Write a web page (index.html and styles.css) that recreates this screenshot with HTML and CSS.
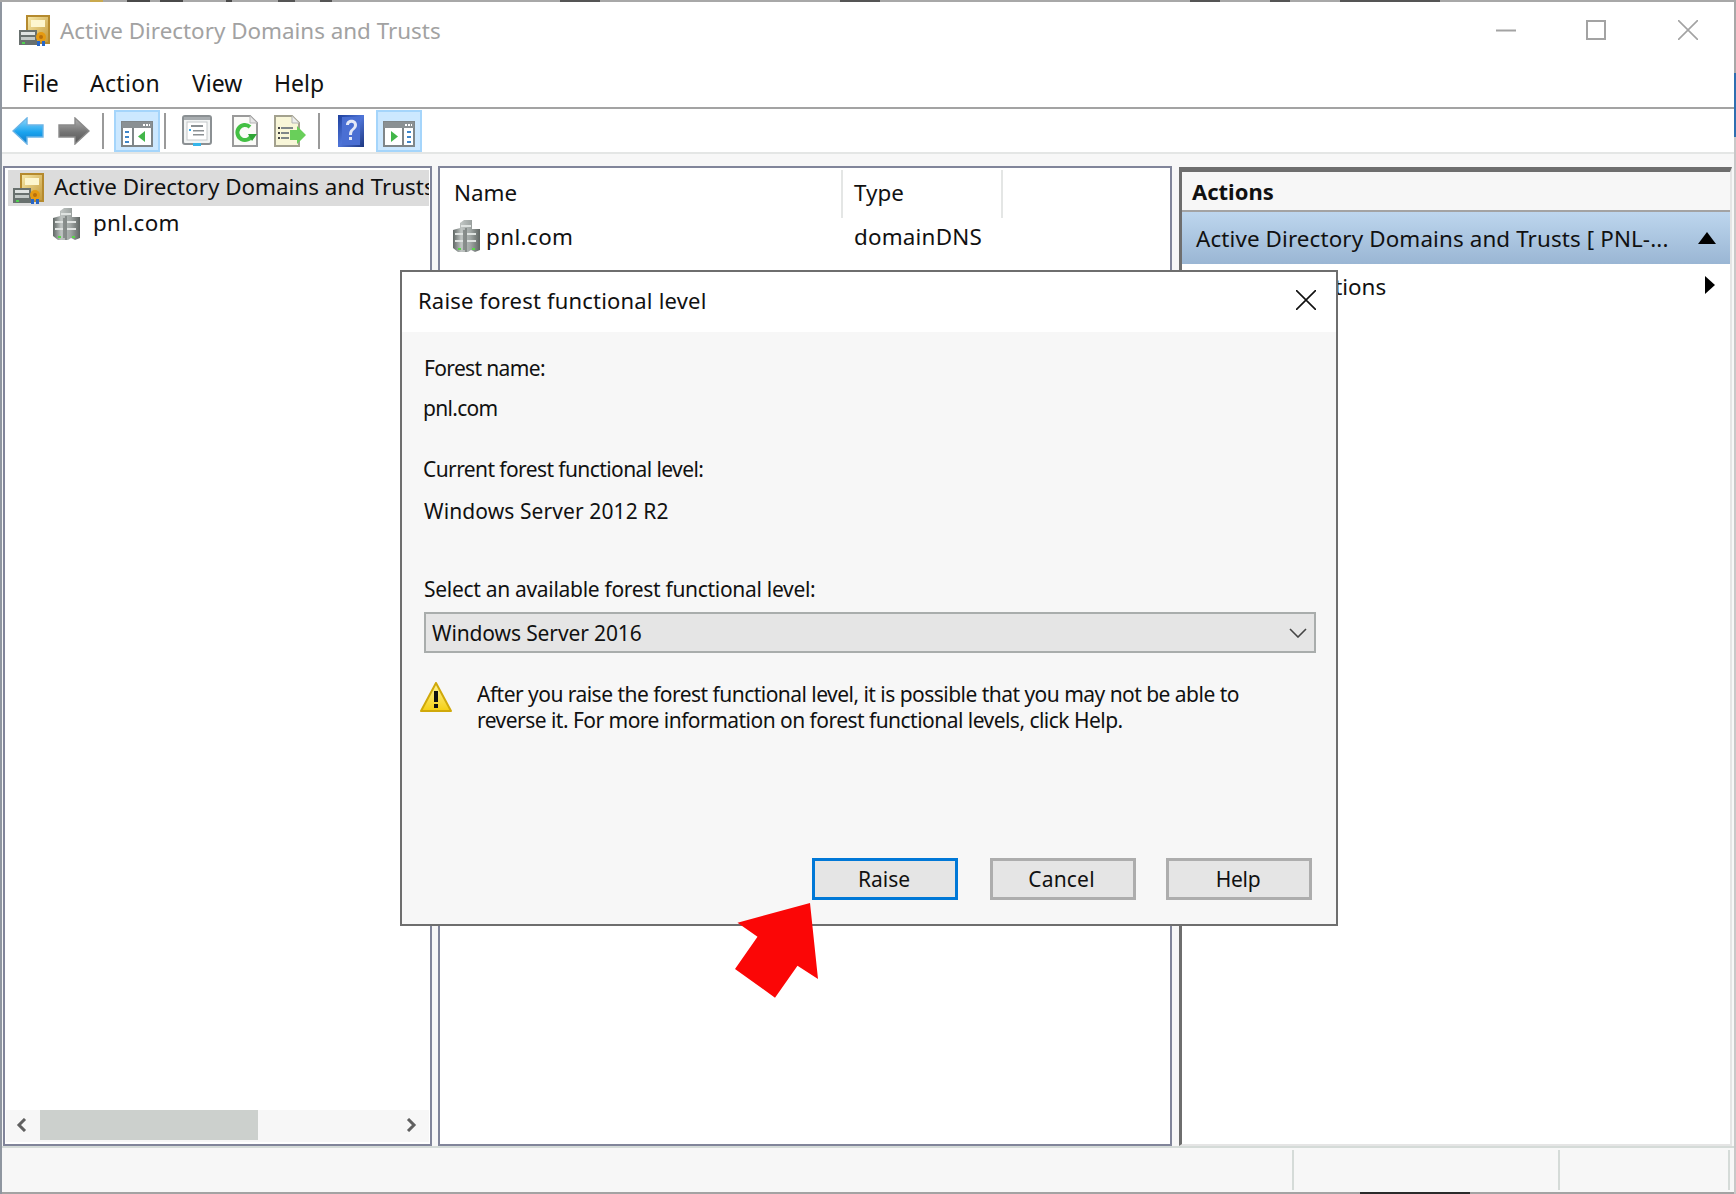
FILE: index.html
```html
<!DOCTYPE html>
<html lang="en">
<head>
<meta charset="utf-8">
<title>Active Directory Domains and Trusts</title>
<link rel="stylesheet" href="styles.css">
</head>
<body>
<svg width="0" height="0" class="defs">
  <defs>
    <linearGradient id="bld" x1="0" y1="0" x2="1" y2="0"><stop offset="0" stop-color="#5f6664"/><stop offset=".3" stop-color="#bfc4c2"/><stop offset=".65" stop-color="#a0a6a4"/><stop offset="1" stop-color="#5f6563"/></linearGradient>
    <linearGradient id="gold" x1="0" y1="0" x2="1" y2="1"><stop offset="0" stop-color="#f6e7a6"/><stop offset="1" stop-color="#c49a3c"/></linearGradient>
    <linearGradient id="blue" x1="0" y1="0" x2="0" y2="1"><stop offset="0" stop-color="#8fd8fc"/><stop offset=".55" stop-color="#1aa3ee"/><stop offset="1" stop-color="#0f78c8"/></linearGradient>
    <linearGradient id="gray" x1="0" y1="0" x2="0" y2="1"><stop offset="0" stop-color="#b3b3b3"/><stop offset=".55" stop-color="#737373"/><stop offset="1" stop-color="#565656"/></linearGradient>
    <linearGradient id="qm" x1="0" y1="0" x2="1" y2="1"><stop offset="0" stop-color="#1d3f9c"/><stop offset=".5" stop-color="#4f75d8"/><stop offset="1" stop-color="#1c367f"/></linearGradient>
    <linearGradient id="warn" x1="0" y1="0" x2="0" y2="1"><stop offset="0" stop-color="#fff49a"/><stop offset="1" stop-color="#f5cf12"/></linearGradient>
    <symbol id="cert" viewBox="0 0 32 32">
      <rect x="8" y="1" width="24" height="29" fill="#b58a2e"/>
      <rect x="10" y="3" width="20" height="25" fill="url(#gold)"/>
      <rect x="13" y="6" width="14" height="7" fill="#fdf6cf"/>
      <rect x="1" y="16" width="18" height="15" fill="#68706e"/>
      <rect x="3" y="18" width="14" height="3" fill="#dfe3e2"/>
      <rect x="3" y="23" width="14" height="3" fill="#c3c9c7"/>
      <rect x="4" y="28" width="3" height="2" fill="#4fd14f"/>
      <circle cx="23" cy="23" r="5" fill="#e59a12"/>
      <circle cx="23" cy="23" r="2" fill="#b96f0c"/>
      <path d="M19 27h3v5h-3zM24 27h3v5h-3z" fill="#2766c8"/>
    </symbol>
    <symbol id="domain" viewBox="0 0 28 32">
      <path d="M8 3l4-3h8v9h8v21l-5 2-4-2-3 2H6L1 28V10l7-2z" fill="url(#bld)"/>
      <path d="M9 5h10v2H9zM3 13h8v2H3zM15 13h9v2h-9zM3 20h8v2H3zM15 20h9v2h-9z" fill="#dfe3e1"/>
      <path d="M12 10v20M14 8v24" stroke="#6a706e" stroke-width="1.200" fill="none"/>
      <rect x="6" y="28" width="3" height="2" fill="#59d64a"/>
      <rect x="20" y="28" width="3" height="2" fill="#59d64a"/>
    </symbol>
  </defs>
</svg>

<div class="window">
  <header class="titlebar">
    <svg class="title-icon"><use href="#cert"/></svg>
    <span class="title-text">Active Directory Domains and Trusts</span>
    <div class="win-controls">
      <svg class="wc wc-min" viewBox="0 0 20 20"><path d="M0 10.500h20" stroke="#a3a3a3" stroke-width="2"/></svg>
      <svg class="wc wc-max" viewBox="0 0 20 20"><rect x="1" y="1" width="18" height="18" fill="none" stroke="#a3a3a3" stroke-width="2"/></svg>
      <svg class="wc wc-close" viewBox="0 0 20 20"><path d="M0 0l20 20M20 0L0 20" stroke="#a3a3a3" stroke-width="1.600"/></svg>
    </div>
  </header>

  <nav class="menubar">
    <span class="menu-item m-file">File</span>
    <span class="menu-item m-action">Action</span>
    <span class="menu-item m-view">View</span>
    <span class="menu-item">Help</span>
  </nav>

  <div class="toolbar">
    <svg class="tb tb-back" viewBox="0 0 32 28"><path d="M1 14L15 1v7h16v12H15v7z" fill="url(#blue)" stroke="#6bb4e6" stroke-width="1.400"/></svg>
    <svg class="tb tb-fwd" viewBox="0 0 32 28"><path d="M31 14L17 1v7H1v12h16v7z" fill="url(#gray)" stroke="#8a8a8a" stroke-width="1.400"/></svg>
    <i class="tb-sep sep-a"></i>
    <span class="tb-toggle toggle-a">
      <svg class="tb-pane" viewBox="0 0 32 26">
        <rect x="1" y="1" width="30" height="24" fill="#fff" stroke="#7f8689" stroke-width="2"/>
        <rect x="1" y="1" width="30" height="6" fill="#8a9093"/>
        <path d="M22 3h2v2h-2zM25 3h2v2h-2zM28 3h1v2h-1z" fill="#fff"/>
        <rect x="11" y="7" width="2" height="18" fill="#7f8689"/>
        <path d="M4 10h4v2H4zM4 15h4v2H4zM4 20h4v2H4z" fill="#3f86c9"/>
        <path d="M24 10v11l-7-5.500z" fill="#42b649"/>
      </svg>
    </span>
    <i class="tb-sep sep-b"></i>
    <svg class="tb tb-list" viewBox="0 0 30 32">
      <rect x="1" y="1" width="28" height="28" rx="2" fill="#f2f4f4" stroke="#8b9093" stroke-width="2"/>
      <rect x="2" y="2" width="26" height="3" fill="#a8adb0"/>
      <rect x="5" y="7" width="20" height="18" fill="#fff" stroke="#c4c8ca"/>
      <path d="M9 10h12v2H9zM11 15h11v1.500H11zM11 19h11v1.500H11z" fill="#8b9093"/>
      <path d="M7 14h2v2H7z" fill="#35a9e8"/>
      <rect x="11" y="28" width="8" height="3" fill="#35b5ea"/>
    </svg>
    <svg class="tb tb-refresh" viewBox="0 0 26 32">
      <path d="M1 1h17l7 7v23H1z" fill="#fbfbf8" stroke="#9a9a9a" stroke-width="2"/>
      <path d="M18 1v7h7" fill="#e6e6e6" stroke="#b5b5b5"/>
      <path d="M18 12a7.500 7.500 0 1 0 2 8" fill="none" stroke="#43c043" stroke-width="4"/>
      <path d="M16 19h9l-5 7z" fill="#2fa535"/>
    </svg>
    <svg class="tb tb-export" viewBox="0 0 32 32">
      <path d="M1 1h17l7 7v23H1z" fill="#f8f6d8" stroke="#a3a18e" stroke-width="2"/>
      <path d="M18 1v7h7" fill="#eeeeee" stroke="#b5b5b5"/>
      <path d="M7 12h12v2H7zM7 17h8v2H7zM7 22h8v2H7z" fill="#7f8689"/>
      <path d="M4 12h2v2H4zM4 17h2v2H4zM4 22h2v2H4z" fill="#444"/>
      <path d="M16 15h7v-4l9 9-9 9v-4h-7z" fill="#69cf5a"/>
    </svg>
    <i class="tb-sep sep-c"></i>
    <svg class="tb tb-help" viewBox="0 0 26 32">
      <rect width="26" height="32" fill="url(#qm)"/>
      <rect x="4" y="2" width="18" height="28" fill="#4a6fd3"/>
      <path d="M8 10c0-7 11-7 11 0 0 5-5 4-5 10h-3c0-7 5-6 5-10 0-3-5-3-5 0z" fill="#e4e9f7"/>
      <rect x="11" y="22" width="3" height="3" fill="#e4e9f7"/>
    </svg>
    <span class="tb-toggle toggle-b">
      <svg class="tb-pane" viewBox="0 0 32 26">
        <rect x="1" y="1" width="30" height="24" fill="#fff" stroke="#7f8689" stroke-width="2"/>
        <rect x="1" y="1" width="30" height="6" fill="#8a9093"/>
        <path d="M22 3h2v2h-2zM25 3h2v2h-2zM28 3h1v2h-1z" fill="#fff"/>
        <rect x="19" y="7" width="2" height="18" fill="#7f8689"/>
        <path d="M24 10h4v2h-4zM24 15h4v2h-4zM24 20h4v2h-4z" fill="#3f86c9"/>
        <path d="M8 10v11l7-5.500z" fill="#42b649"/>
      </svg>
    </span>
  </div>

  <main class="panes">
    <section class="pane-tree">
      <div class="tree">
        <div class="tree-row selected">
          <svg class="tree-icon"><use href="#cert"/></svg>
          <span class="tree-label">Active Directory Domains and Trusts</span>
        </div>
        <div class="tree-row child">
          <svg class="dom-icon"><use href="#domain"/></svg>
          <span class="tree-label">pnl.com</span>
        </div>
      </div>
      <div class="hscroll">
        <svg class="sb-arrow" viewBox="0 0 12 14"><path d="M9 1L3 7l6 6" fill="none" stroke="#606060" stroke-width="3"/></svg>
        <div class="sb-track"><div class="sb-thumb"></div></div>
        <svg class="sb-arrow" viewBox="0 0 12 14"><path d="M3 1l6 6-6 6" fill="none" stroke="#606060" stroke-width="3"/></svg>
      </div>
    </section>

    <section class="pane-list">
      <div class="list-head">
        <span class="col col-name">Name</span>
        <span class="col col-type">Type</span>
      </div>
      <div class="list-row">
        <span class="cell-name"><svg class="dom-icon"><use href="#domain"/></svg><span class="cell-label">pnl.com</span></span>
        <span class="cell-type">domainDNS</span>
      </div>
    </section>

    <aside class="pane-actions">
      <div class="act-title">Actions</div>
      <div class="act-band"><span>Active Directory Domains and Trusts [ PNL-...</span><i class="tri-up"></i></div>
      <div class="act-row"><span>More Actions</span><i class="tri-right"></i></div>
    </aside>
  </main>

  <footer class="statusbar">
    <i class="st-cell st-a"></i><i class="st-cell st-b"></i><i class="st-cell st-c"></i>
  </footer>
</div>

<div class="dialog">
  <div class="dlg-head">
    <span class="dlg-title">Raise forest functional level</span>
    <svg class="dlg-close" viewBox="0 0 20 20"><path d="M0 0l20 20M20 0L0 20" stroke="#111" stroke-width="1.600"/></svg>
  </div>
  <div class="dlg-body">
    <div class="lbl l1">Forest name:</div>
    <div class="lbl l2">pnl.com</div>
    <div class="lbl l3">Current forest functional level:</div>
    <div class="lbl l4">Windows Server 2012 R2</div>
    <div class="lbl l5">Select an available forest functional level:</div>
    <div class="combo">
      <span class="combo-value">Windows Server 2016</span>
      <svg class="chev" viewBox="0 0 18 10"><path d="M1 1l8 8 8-8" fill="none" stroke="#444" stroke-width="1.600"/></svg>
    </div>
    <div class="warn-row">
      <svg class="warn-icon" viewBox="0 0 32 30">
        <path d="M16 1L1 29h30z" fill="url(#warn)" stroke="#d0a90a" stroke-width="2" stroke-linejoin="round"/>
        <rect x="14" y="9" width="4" height="11" fill="#111"/>
        <rect x="14" y="22" width="4" height="4" fill="#111"/>
      </svg>
      <p class="warn-text">After you raise the forest functional level, it is possible that you may not be able to<br>reverse it. For more information on forest functional levels, click Help.</p>
    </div>
    <div class="dlg-buttons">
      <button class="btn btn-raise">Raise</button>
      <button class="btn btn-cancel">Cancel</button>
      <button class="btn btn-help">Help</button>
    </div>
  </div>
</div>

<svg class="red-arrow" viewBox="0 0 95 100"><polygon points="84,2 11.500,21.700 31.500,35.700 9,68 49,96.700 71.500,64.700 92,78" fill="#fb0606"/></svg>
</body>
</html>
```

FILE: styles.css
```css
* { box-sizing: border-box; }
html, body { margin: 0; padding: 0; }
body {
  width: 1736px;
  height: 1194px;
  position: relative;
  overflow: hidden;
  font-family: "Noto Sans", "Open Sans", sans-serif;
  color: #111;
  padding: 2px 2px 0 2px;
  background:
    linear-gradient(90deg, #a8a8a8 0 90px, #c9a94e 90px 103px, #a8a8a8 103px 127px, #4a4a4a 127px 150px, #a8a8a8 150px 160px, #4a4a4a 160px 183px, #a8a8a8 183px 226px, #4a4a4a 226px 232px, #a8a8a8 232px 278px, #555 278px 295px, #a8a8a8 295px 320px, #555 320px 332px, #a8a8a8 332px 560px, #555 560px 600px, #a8a8a8 600px 840px, #555 840px 880px, #a8a8a8 880px 1190px, #555 1190px 1220px, #a8a8a8 1220px 1270px, #555 1270px 1290px, #a8a8a8 1290px 1340px, #555 1340px 1440px, #a8a8a8 1440px) top / 100% 2px no-repeat,
    linear-gradient(180deg, #a8a8a8 0 73px, #2f6fb0 73px 137px, #c8c8c8 137px) right / 2px 100% no-repeat,
    #8f96a0;
}
.defs { position: absolute; }
.window {
  width: 1732px;
  height: 1192px;
  background: #fff;
  display: flex;
  flex-direction: column;
}
.titlebar {
  height: 60px;
  display: flex;
  align-items: center;
  flex: none;
  padding-bottom: 4px;
}
.title-icon { width: 32px; height: 32px; margin-left: 16px; flex: none; }
.title-text { margin-left: 10px; font-size: 22.4px; color: #a2a2a2; white-space: nowrap; }
.win-controls { margin-left: auto; display: flex; align-items: center; }
.wc { width: 20px; height: 20px; display: block; }
.wc-min { margin-right: 70px; }
.wc-max { margin-right: 72px; }
.wc-close { margin-right: 36px; }

.menubar {
  height: 47px;
  border-bottom: 2px solid #a3a3a3;
  display: flex;
  align-items: center;
  padding: 0 0 4px 20px;
  font-size: 23px;
  flex: none;
}
.menu-item { white-space: nowrap; }
.m-file { width: 68px; }
.m-action { width: 102px; letter-spacing: .3px; }
.m-view { width: 82px; }

.toolbar {
  height: 45px;
  border-bottom: 2px solid #e4e6e5;
  display: flex;
  align-items: center;
  flex: none;
  background: #fff;
}
.tb { display: block; flex: none; }
.tb-back { width: 32px; height: 28px; margin-left: 10px; margin-top: 1px; }
.tb-fwd { width: 32px; height: 28px; margin-left: 14px; margin-top: 1px; }
.tb-sep { width: 2px; height: 36px; background: #9a9a9a; flex: none; display: block; }
.sep-a { margin-left: 12px; }
.tb-toggle {
  width: 46px;
  height: 42px;
  background: #cce8ff;
  border: 2px solid #a5d5fb;
  display: flex;
  align-items: center;
  justify-content: center;
  flex: none;
}
.tb-pane { width: 32px; height: 26px; margin-top: 6px; display: block; }
.toggle-a { margin-left: 10px; }
.sep-b { margin-left: 4px; }
.tb-list { width: 30px; height: 32px; margin-left: 16px; }
.tb-refresh { width: 26px; height: 32px; margin-left: 20px; }
.tb-export { width: 32px; height: 32px; margin-left: 16px; }
.sep-c { margin-left: 12px; }
.tb-help { width: 26px; height: 32px; margin-left: 18px; }
.toggle-b { margin-left: 12px; }

.panes {
  flex: 1;
  min-height: 0;
  background: #f7f7f7;
  display: flex;
  padding: 12px 2px 0 1px;
}
.pane-tree {
  width: 429px;
  border: 2px solid #81859a;
  background: #fff;
  display: flex;
  flex-direction: column;
  flex: none;
  padding: 2px 1px 2px 3px;
}
.tree { flex: 1; overflow: hidden; }
.tree-row { height: 36px; display: flex; align-items: center; white-space: nowrap; overflow: hidden; font-size: 22.4px; }
.tree-label { margin-bottom: 4px; }
.tree-row.selected { background: #dcdcdc; }
.tree-icon { width: 32px; height: 32px; margin-left: 4px; flex: none; }
.selected .tree-label { margin-left: 10px; }
.child .dom-icon { margin-left: 44px; }
.child .tree-label { margin-left: 13px; letter-spacing: .3px; }
.dom-icon { width: 28px; height: 32px; flex: none; }
.hscroll {
  height: 32px;
  background: #f7f7f7;
  display: flex;
  align-items: flex-start;
  flex: none;
  margin-left: -2px;
}
.sb-arrow { width: 12px; height: 14px; margin: 8px 12px 0 10px; flex: none; }
.sb-track { flex: 1; height: 30px; }
.sb-thumb { width: 218px; height: 30px; background: #ccd0cd; }

.pane-list {
  width: 734px;
  margin-left: 6px;
  border: 2px solid #81859a;
  background: #fff;
  flex: none;
  font-size: 22.4px;
}
.list-head { height: 50px; padding-top: 2px; display: flex; }
.col { display: flex; align-items: center; border-right: 2px solid #e4e6e5; padding-bottom: 4px; }
.col-name { width: 403px; padding-left: 14px; }
.col-type { width: 160px; padding-left: 11px; }
.list-row { height: 36px; display: flex; align-items: center; }
.cell-name { width: 403px; padding-left: 12px; display: flex; align-items: center; gap: 6px; }
.cell-label { letter-spacing: .4px; }
.cell-type { padding-left: 11px; letter-spacing: .2px; }

.pane-actions {
  flex: 1;
  margin-left: 7px;
  margin-top: 1px;
  background: #fff;
  border-top: 5px solid #6e6e6e;
  border-left: 3px solid #6e6e6e;
  border-right: 2px solid #e5e5e5;
  border-bottom: 2px solid #e5e5e5;
  font-size: 22.4px;
}
.act-title {
  height: 40px;
  background: #f7f7f7;
  border-bottom: 2px solid #a3a3a3;
  font-weight: 700;
  font-size: 22px;
  padding-left: 10px;
  display: flex;
  align-items: center;
}
.act-band {
  height: 52px;
  background: linear-gradient(180deg, #bdd6ee, #9ab6d4);
  display: flex;
  align-items: center;
  padding-left: 14px;
  position: relative;
  letter-spacing: .12px;
}
.tri-up {
  position: absolute;
  left: 516px;
  top: 20px;
  border-left: 9px solid transparent;
  border-right: 9px solid transparent;
  border-bottom: 12px solid #000;
}
.act-row { height: 48px; display: flex; align-items: center; padding: 0 0 4px 66px; position: relative; }
.tri-right {
  position: absolute;
  left: 523px;
  top: 12px;
  border-top: 9px solid transparent;
  border-bottom: 9px solid transparent;
  border-left: 10px solid #000;
}

.statusbar {
  height: 48px;
  flex: none;
  background: #f7f7f7;
  border-top: 2px solid #d5dbd8;
  border-bottom: 2px solid #a3a3a3;
  display: flex;
  padding-top: 2px;
  position: relative;
}
.statusbar::after {
  content: "";
  position: absolute;
  left: 1358px;
  bottom: -2px;
  width: 110px;
  height: 2px;
  background: #2a2a2a;
}
.st-cell { display: block; height: 40px; border-right: 2px solid #d5dbd8; }
.st-a { width: 1292px; }
.st-b { width: 266px; }
.st-c { width: 170px; }

.dialog {
  position: absolute;
  left: 400px;
  top: 270px;
  width: 938px;
  height: 656px;
  border: 2px solid #6e6e6e;
  background: #f7f7f7;
  display: flex;
  flex-direction: column;
  font-size: 21px;
}
.dlg-head {
  height: 60px;
  background: #fff;
  display: flex;
  align-items: center;
  padding: 0 20px 0 16px;
  flex: none;
}
.dlg-title { font-size: 22px; letter-spacing: .19px; margin-bottom: 4px; }
.dlg-close { width: 20px; height: 20px; margin-left: auto; margin-bottom: 4px; }
.dlg-body {
  flex: 1;
  display: flex;
  flex-direction: column;
  padding: 22px 20px 24px 22px;
}
.lbl { height: 28px; line-height: 28px; white-space: nowrap; }
.l1 { letter-spacing: -.65px; }
.l2 { margin-top: 12px; margin-left: -1px; letter-spacing: -.7px; }
.l3 { margin-top: 33px; margin-left: -1px; letter-spacing: -.59px; }
.l4 { margin-top: 14px; letter-spacing: .1px; }
.l5 { margin-top: 50px; letter-spacing: -.3px; }
.combo {
  height: 41px;
  margin-top: 9px;
  border: 2px solid #a9adac;
  background: #e5e5e5;
  display: flex;
  align-items: center;
  padding: 0 6px 0 6px;
  flex: none;
}
.combo-value { letter-spacing: -.12px; }
.chev { width: 18px; height: 10px; margin-left: auto; margin-right: 1px; }
.warn-row { display: flex; margin-top: 28px; margin-left: -4px; }
.warn-icon { width: 32px; height: 30px; flex: none; margin-top: 1px; }
.warn-text { margin: 0 0 0 25px; line-height: 26px; white-space: nowrap; letter-spacing: -.53px; }
.dlg-buttons { margin-top: auto; display: flex; justify-content: flex-end; padding-right: 4px; }
.btn {
  width: 146px;
  height: 42px;
  background: #e5e5e5;
  border: 3px solid #adadad;
  font: inherit;
  color: #111;
  padding: 0;
}
.btn-raise { border-color: #0078d7; margin-right: 32px; padding-right: 2px; }
.btn-cancel { margin-right: 30px; letter-spacing: .2px; padding-right: 3px; }
.btn-help { letter-spacing: -.3px; padding-right: 2px; }

.red-arrow {
  position: absolute;
  left: 726px;
  top: 901px;
  width: 95px;
  height: 100px;
}
```
